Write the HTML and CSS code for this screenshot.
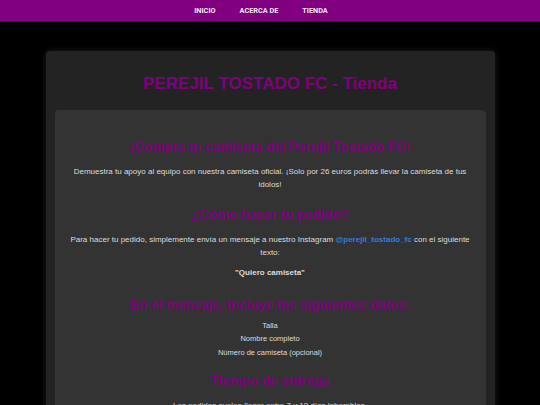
FILE: index.html
```html
<!DOCTYPE html>
<html lang="es">
<head>
<meta charset="utf-8">
<title>Tienda - Perejil Tostado FC</title>
<link rel="stylesheet" href="styles.css">
</head>
<body>
<nav class="topnav">
  <a href="#">INICIO</a>
  <a href="#">ACERCA DE</a>
  <a href="#">TIENDA</a>
</nav>
<main class="container">
  <h1 class="title">PEREJIL TOSTADO FC - Tienda</h1>
  <section class="card">
    <h2>¡Compra tu camiseta del Perejil Tostado FC!</h2>
    <p>Demuestra tu apoyo al equipo con nuestra camiseta oficial. ¡Solo por 26 euros podrás llevar la camiseta de tus idolos!</p>
    <h2>¿Cómo hacer tu pedido?</h2>
    <p>Para hacer tu pedido, simplemente envía un mensaje a nuestro Instagram <a class="insta" href="#">@perejil_tostado_fc</a> con el siguiente texto:</p>
    <p class="quote">"Quiero camiseta"</p>
    <h2>En el mensaje, incluye los siguientes datos:</h2>
    <ul class="datos">
      <li>Talla</li>
      <li>Nombre completo</li>
      <li>Número de camiseta (opcional)</li>
    </ul>
    <h2>Tiempo de entrega</h2>
    <p>Los pedidos suelen llegar entre 7 y 10 días laborables.</p>
  </section>
</main>
</body>
</html>
```
FILE: styles.css
```css
html, body {
  margin: 0;
  padding: 0;
}
body {
  background: #000;
  font-family: "Liberation Sans", Arial, sans-serif;
  color: #dcdcdc;
}
.topnav {
  height: 21px;
  background: #800080;
  display: flex;
  justify-content: center;
  align-items: center;
  gap: 24px;
  padding-right: 18px;
}
.topnav a {
  color: #f3e6f3;
  font-family: Roboto, "Liberation Sans", sans-serif;
  font-weight: bold;
  font-size: 7.3px;
  text-decoration: none;
}
.container {
  width: 449px;
  margin: 30px auto 0;
  background: #232323;
  border-radius: 4px;
  box-shadow: 0 0 6px rgba(90, 90, 90, 0.35);
  padding: 24px 9px 20px;
  box-sizing: border-box;
}
.title {
  margin: 0 0 17px;
  text-align: center;
  color: #800080;
  font-size: 17px;
  line-height: 18px;
  font-weight: bold;
}
.card {
  background: #333;
  border-radius: 4px;
  padding: 12.5px 14px 20px;
  text-align: center;
}
.card h2 {
  color: #800080;
  font-size: 13.4px;
  line-height: 15px;
  font-weight: bold;
  margin: 16px 0 11px;
}
.card p {
  font-size: 8px;
  line-height: 13px;
  margin: 7px 0;
}
.insta {
  color: #2f7de1;
  font-weight: bold;
  text-decoration: none;
}
.card .quote {
  font-weight: bold;
  margin-bottom: 18px;
}
.datos {
  list-style: none;
  padding: 0;
  margin: -4px 0 7px;
  font-size: 7.5px;
  line-height: 13.5px;
}
.card .datos + h2 {
  margin-top: 14px;
}
```
